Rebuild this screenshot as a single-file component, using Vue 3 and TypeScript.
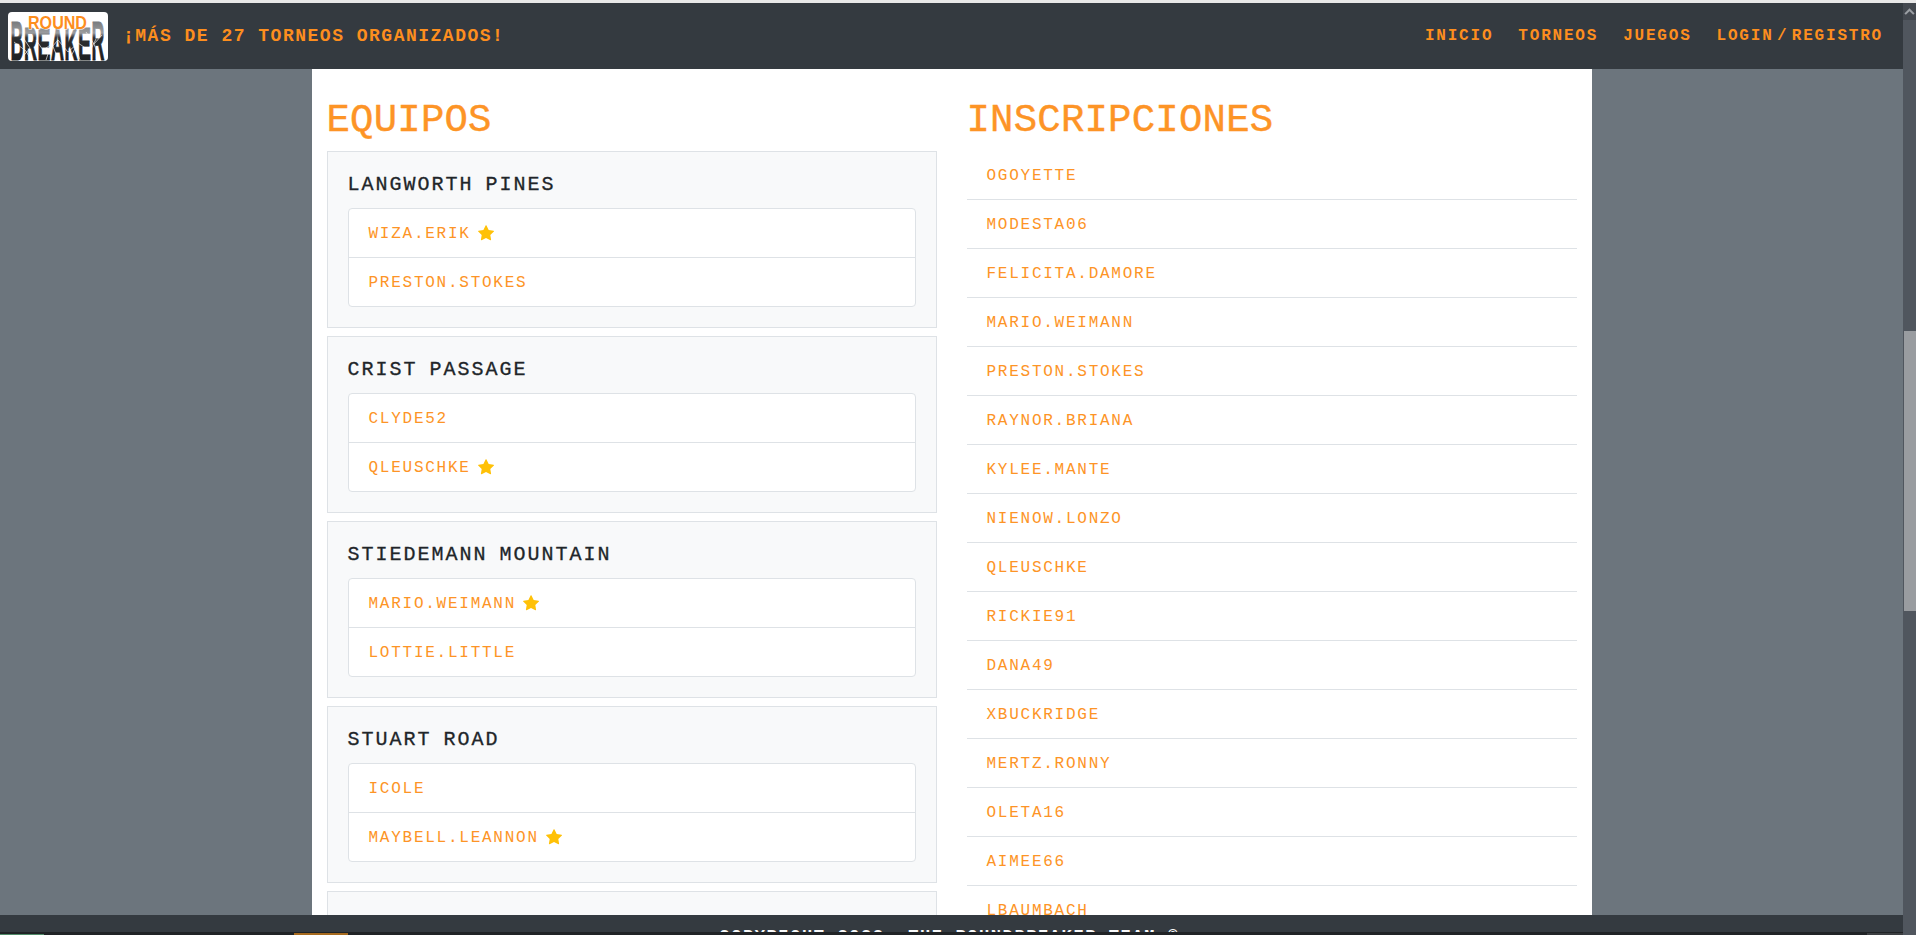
<script setup lang="ts">
interface Player {
  name: string
  captain?: boolean
}

interface Team {
  name: string
  players: Player[]
}

const teams: Team[] = [
  { name: 'Langworth Pines', players: [{ name: 'wiza.erik', captain: true }, { name: 'preston.stokes' }] },
  { name: 'Crist Passage', players: [{ name: 'clyde52' }, { name: 'qleuschke', captain: true }] },
  { name: 'Stiedemann Mountain', players: [{ name: 'mario.weimann', captain: true }, { name: 'lottie.little' }] },
  { name: 'Stuart Road', players: [{ name: 'icole' }, { name: 'maybell.leannon', captain: true }] },
  { name: 'Kuhn Harbor', players: [{ name: 'dana49' }, { name: 'oleta16', captain: true }] },
]

const signups = [
  'ogoyette', 'modesta06', 'felicita.damore', 'mario.weimann', 'preston.stokes', 'raynor.briana',
  'kylee.mante', 'nienow.lonzo', 'qleuschke', 'rickie91', 'dana49', 'xbuckridge',
  'mertz.ronny', 'oleta16', 'aimee66', 'lbaumbach',
]

const navLinks = ['Inicio', 'Torneos', 'Juegos', 'Login / Registro']

// letters of the logo: the outer two are taller than the middle ones
const logoLetters = [
  { c: 'B', x: 2.5, size: 56 },
  { c: 'R', x: 16, size: 46 },
  { c: 'E', x: 29.5, size: 44 },
  { c: 'A', x: 43, size: 44 },
  { c: 'K', x: 56.5, size: 44 },
  { c: 'E', x: 70, size: 46 },
  { c: 'R', x: 83.5, size: 56 },
]
</script>

<template>
  <div class="screen">
    <div class="top-strip"></div>
    <div class="frame">
      <div class="page">
        <header class="navbar">
          <div class="brand">
            <svg class="logo" viewBox="0 0 100 49" width="100" height="49">
              <defs>
                <linearGradient id="breakerFill" gradientUnits="userSpaceOnUse" x1="0" y1="9" x2="0" y2="49">
                  <stop offset="0" stop-color="#77797b" />
                  <stop offset="0.3" stop-color="#9a9c9e" />
                  <stop offset="0.42" stop-color="#2c2e30" />
                  <stop offset="1" stop-color="#1d1f21" />
                </linearGradient>
              </defs>
              <rect width="100" height="49" rx="4" fill="#fff" />
              <text
                v-for="(l, i) in logoLetters"
                :key="i"
                :x="l.x"
                y="48"
                :font-size="l.size"
                textLength="13"
                lengthAdjust="spacingAndGlyphs"
                class="logo-letter"
              >{{ l.c }}</text>
              <path
                d="M6 30l12 9 5 9M14 24l8 12-9 11M28 28l7 10 9-6 6 15M38 42l12-14 10 12 10-9M62 46l8-15 12 8 6-12M78 20l8 12 8-9M86 32l6 16M44 30l-6 18M66 30l6 18"
                fill="none"
                stroke="#fff"
                stroke-width="0.7"
                opacity="0.9"
              />
              <text x="20" y="16.5" font-size="19" textLength="59" lengthAdjust="spacingAndGlyphs" class="logo-round">ROUND</text>
            </svg>
            <span class="tagline">¡Más de 27 torneos organizados!</span>
          </div>
          <nav class="nav-links">
            <a v-for="link in navLinks" :key="link" href="#">{{ link }}</a>
          </nav>
        </header>

        <main class="main">
          <div class="sheet">
            <section class="col-teams">
              <h2>Equipos</h2>
              <div v-for="team in teams" :key="team.name" class="team-card">
                <h5>{{ team.name }}</h5>
                <ul class="player-list">
                  <li v-for="p in team.players" :key="p.name">
                    <a href="#" class="item-link">{{ p.name }}</a>
                    <svg v-if="p.captain" class="star" viewBox="0 0 16 16" width="16" height="16">
                      <path d="M3.6 15.3c-.4.2-.8-.2-.7-.6l.8-4.7L.2 6.6c-.3-.3-.1-.9.3-.9l4.9-.7L7.6.5c.2-.4.7-.4.9 0l2.2 4.5 4.9.7c.4.1.6.6.3.9L12.3 10l.8 4.7c.1.4-.3.8-.7.6L8 13l-4.4 2.3z" />
                    </svg>
                  </li>
                </ul>
              </div>
            </section>

            <section class="col-signups">
              <h2>Inscripciones</h2>
              <ul class="signup-list">
                <li v-for="s in signups" :key="s"><a href="#" class="item-link">{{ s }}</a></li>
              </ul>
            </section>
          </div>
        </main>

        <footer class="footer">
          <span>Copyright 2022. The RoundBreaker Team ©</span>
        </footer>
        <div class="bottom-strip">
          <span class="seg seg-green"></span>
          <span class="seg seg-orange"></span>
          <span class="seg seg-grey"></span>
        </div>
      </div>

      <div class="scrollbar">
        <div class="scroll-up">
          <svg viewBox="0 0 12 8" width="11" height="7"><path d="M1 7l5-5 5 5" fill="none" stroke="#9a9ea3" stroke-width="2.4" /></svg>
        </div>
        <div class="scroll-thumb"></div>
      </div>
    </div>
  </div>
</template>

<style>
html, body {
  margin: 0;
  height: 100%;
  overflow: hidden;
}
</style>

<style scoped>
.screen {
  height: 935px;
  display: flex;
  flex-direction: column;
  overflow: hidden;
  font-family: "Liberation Mono", "DejaVu Sans Mono", monospace;
  background: #6c757d;
}

.top-strip {
  height: 3px;
  flex-shrink: 0;
  background: #e8e8e8;
}

.frame {
  flex: 1;
  min-height: 0;
  display: flex;
}

.page {
  flex: 1;
  min-width: 0;
  display: flex;
  flex-direction: column;
}

/* Navbar */
.navbar {
  height: 66px;
  flex-shrink: 0;
  background: #343a40;
  display: flex;
  align-items: center;
  justify-content: space-between;
  padding: 0 20px 0 8px;
}

.brand {
  display: flex;
  align-items: center;
  gap: 15px;
}

.logo {
  display: block;
  flex-shrink: 0;
}

.logo-letter {
  font-family: "Liberation Sans Narrow", "Liberation Sans", sans-serif;
  font-weight: 700;
  fill: url(#breakerFill);
  stroke: url(#breakerFill);
  stroke-width: 0.9;
}

.logo-round {
  font-family: "Liberation Sans", sans-serif;
  font-weight: 700;
  fill: #fd8e1e;
  stroke: #fff;
  stroke-width: 1;
  paint-order: stroke;
}

.tagline {
  color: #fd8e1e;
  font-size: 18px;
  font-weight: 700;
  letter-spacing: 1.5px;
  text-transform: uppercase;
}

.nav-links {
  display: flex;
  gap: 25px;
}

.nav-links a {
  color: #fd8e1e;
  font-size: 16px;
  font-weight: 700;
  letter-spacing: 1.8px;
  word-spacing: -8px;
  text-transform: uppercase;
  text-decoration: none;
}

/* Main */
.main {
  flex: 1;
  min-height: 0;
  overflow: hidden;
  display: flex;
  justify-content: center;
  background: #6c757d;
}

.sheet {
  width: 1280px;
  box-sizing: border-box;
  background: #fff;
  padding: 0 15px;
  display: grid;
  grid-template-columns: 610px 610px;
  column-gap: 30px;
  align-content: start;
  height: 100%;
  overflow: hidden;
}

h2 {
  margin: 0;
  padding-top: 30px;
  height: 82px;
  box-sizing: border-box;
  color: #fd9426;
  font-size: 39px;
  font-weight: 400;
  letter-spacing: 0.2px;
  line-height: 45px;
  text-transform: uppercase;
  -webkit-text-stroke: 0.4px #fd9426;
}

.team-card {
  height: 177px;
  box-sizing: border-box;
  margin-bottom: 8px;
  padding: 20px;
  background: #f8f9fa;
  border: 1px solid #dee2e6;
}

h5 {
  margin: 0 0 11px;
  padding-top: 1px;
  color: #212529;
  font-size: 20px;
  font-weight: 400;
  letter-spacing: 2px;
  word-spacing: -2px;
  line-height: 24px;
  text-transform: uppercase;
  -webkit-text-stroke: 0.3px #212529;
}

.player-list {
  list-style: none;
  margin: 0;
  padding: 0;
  background: #fff;
  border: 1px solid #dee2e6;
  border-radius: 4px;
}

.player-list li {
  height: 48px;
  box-sizing: border-box;
  padding: 2px 20px 0;
  display: flex;
  align-items: center;
  gap: 7px;
}

.player-list li + li {
  border-top: 1px solid #dee2e6;
  height: 49px;
}

.item-link {
  color: #fd9426;
  font-size: 16px;
  letter-spacing: 1.75px;
  text-transform: uppercase;
  text-decoration: none;
}

.star {
  fill: #ffc107;
  margin-top: -2px;
}

.signup-list {
  list-style: none;
  margin: 0;
  padding: 0;
}

.signup-list li {
  height: 49px;
  box-sizing: border-box;
  padding: 2px 20px 0;
  display: flex;
  align-items: center;
  border-bottom: 1px solid #dee2e6;
}

/* Footer */
.footer {
  height: 17px;
  flex-shrink: 0;
  background: #343a40;
  overflow: hidden;
  text-align: center;
}

.footer span {
  display: block;
  padding: 12px 4px 0 0;
  color: #f8f9fa;
  font-size: 17px;
  font-weight: 700;
  letter-spacing: 1.6px;
  line-height: 20px;
  text-transform: uppercase;
}

.bottom-strip {
  height: 3px;
  flex-shrink: 0;
  background: #202326;
  position: relative;
}

.seg {
  position: absolute;
  bottom: 0;
}

.seg-green {
  left: 0;
  width: 44px;
  height: 1px;
  background: #4f8a68;
}

.seg-orange {
  left: 294px;
  width: 54px;
  height: 2px;
  background: #a66a1e;
}

.seg-grey {
  right: 0;
  width: 36px;
  height: 2px;
  background: #3c3f42;
}

/* Scrollbar */
.scrollbar {
  width: 13px;
  flex-shrink: 0;
  background: #50565e;
  display: flex;
  flex-direction: column;
}

.scroll-up {
  height: 17px;
  display: flex;
  align-items: center;
  justify-content: center;
  background: #43484f;
}

.scroll-thumb {
  height: 280px;
  margin-top: 311px;
  margin-left: 1px;
  background: #999ca0;
}
</style>
